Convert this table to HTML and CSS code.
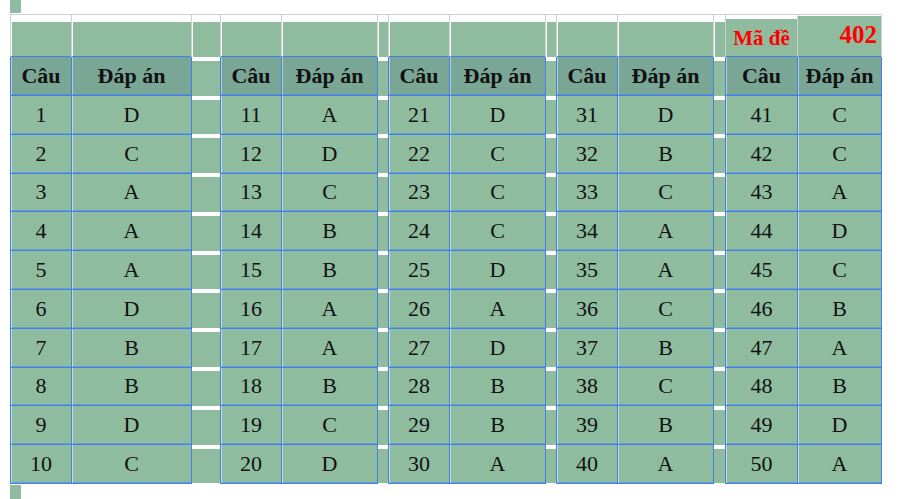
FILE: index.html
```html
<!DOCTYPE html>
<html lang="vi">
<head>
<meta charset="utf-8">
<title>Đáp án</title>
<link rel="stylesheet" href="styles.css">
</head>
<body>
<div class="stub stub-top"></div>
<table class="sheet">
<colgroup>
<col class="w61"><col class="w120"><col class="w29">
<col class="w61"><col class="w96"><col class="w11">
<col class="w61"><col class="w96"><col class="w11">
<col class="w61"><col class="w96"><col class="w12">
<col class="w72"><col class="w84">
</colgroup>
<tr class="top">
<td></td><td></td><td></td><td></td><td></td><td></td><td></td><td></td><td></td><td></td><td></td><td></td>
<td class="code-label">Mã đề</td><td class="code-value">402</td>
</tr>
<tr class="head">
<th>Câu</th><th>Đáp án</th><td class="gap"></td>
<th>Câu</th><th>Đáp án</th><td class="gap"></td>
<th>Câu</th><th>Đáp án</th><td class="gap"></td>
<th>Câu</th><th>Đáp án</th><td class="gap"></td>
<th>Câu</th><th>Đáp án</th>
</tr>
<tr class="row"><td>1</td><td>D</td><td class="gap"></td><td>11</td><td>A</td><td class="gap"></td><td>21</td><td>D</td><td class="gap"></td><td>31</td><td>D</td><td class="gap"></td><td>41</td><td>C</td></tr>
<tr class="row"><td>2</td><td>C</td><td class="gap"></td><td>12</td><td>D</td><td class="gap"></td><td>22</td><td>C</td><td class="gap"></td><td>32</td><td>B</td><td class="gap"></td><td>42</td><td>C</td></tr>
<tr class="row"><td>3</td><td>A</td><td class="gap"></td><td>13</td><td>C</td><td class="gap"></td><td>23</td><td>C</td><td class="gap"></td><td>33</td><td>C</td><td class="gap"></td><td>43</td><td>A</td></tr>
<tr class="row"><td>4</td><td>A</td><td class="gap"></td><td>14</td><td>B</td><td class="gap"></td><td>24</td><td>C</td><td class="gap"></td><td>34</td><td>A</td><td class="gap"></td><td>44</td><td>D</td></tr>
<tr class="row"><td>5</td><td>A</td><td class="gap"></td><td>15</td><td>B</td><td class="gap"></td><td>25</td><td>D</td><td class="gap"></td><td>35</td><td>A</td><td class="gap"></td><td>45</td><td>C</td></tr>
<tr class="row"><td>6</td><td>D</td><td class="gap"></td><td>16</td><td>A</td><td class="gap"></td><td>26</td><td>A</td><td class="gap"></td><td>36</td><td>C</td><td class="gap"></td><td>46</td><td>B</td></tr>
<tr class="row"><td>7</td><td>B</td><td class="gap"></td><td>17</td><td>A</td><td class="gap"></td><td>27</td><td>D</td><td class="gap"></td><td>37</td><td>B</td><td class="gap"></td><td>47</td><td>A</td></tr>
<tr class="row"><td>8</td><td>B</td><td class="gap"></td><td>18</td><td>B</td><td class="gap"></td><td>28</td><td>B</td><td class="gap"></td><td>38</td><td>C</td><td class="gap"></td><td>48</td><td>B</td></tr>
<tr class="row"><td>9</td><td>D</td><td class="gap"></td><td>19</td><td>C</td><td class="gap"></td><td>29</td><td>B</td><td class="gap"></td><td>39</td><td>B</td><td class="gap"></td><td>49</td><td>D</td></tr>
<tr class="row"><td>10</td><td>C</td><td class="gap"></td><td>20</td><td>D</td><td class="gap"></td><td>30</td><td>A</td><td class="gap"></td><td>40</td><td>A</td><td class="gap"></td><td>50</td><td>A</td></tr>
</table>
<div class="stub stub-bottom"></div>
</body>
</html>
```

FILE: styles.css
```css
html, body {
  margin: 0;
  padding: 0;
  background: #ffffff;
}

body {
  font-family: "Liberation Serif", "DejaVu Serif", serif;
  color: #111111;
  overflow: hidden;
}

.stub {
  width: 11px;
  margin-left: 10px;
  background: #8fbc9f;
}

.stub-top {
  height: 13px;
  margin-bottom: 1px;
}

.stub-bottom {
  height: 15px;
  margin-top: 1px;
}

.sheet {
  margin-left: 10px;
  border-collapse: collapse;
  table-layout: fixed;
  width: 871px;
}

.w61 { width: 61px; }
.w120 { width: 120px; }
.w29 { width: 29px; }
.w96 { width: 96px; }
.w11 { width: 11px; }
.w12 { width: 12px; }
.w72 { width: 72px; }
.w84 { width: 84px; }

.sheet td,
.sheet th {
  padding: 0;
  text-align: center;
  vertical-align: middle;
  background: #8fbc9f;
  font-size: 22px;
  line-height: 1;
}

.top {
  height: 42px;
}

.top td {
  border-top: 1px solid #d0d0d0;
  border-left: 1px solid #d0d0d0;
  border-right: 1px solid #d0d0d0;
  border-bottom: none;
  box-shadow: inset 0 7px 0 #ffffff, inset 1px 0 0 #ffffff;
}

.top .code-label {
  color: #ff0000;
  font-weight: bold;
  font-size: 21px;
  box-shadow: inset 0 4px 0 #ffffff;
  padding-top: 5px;
}

.top .code-value {
  color: #ff0000;
  font-weight: bold;
  font-size: 25px;
  text-align: right;
  padding-right: 4px;
  padding-bottom: 2px;
  box-shadow: inset 0 1px 0 #ffffff;
}

.head {
  height: 39px;
}

.head th {
  background: #7aa695;
  font-weight: bold;
  border: 1px solid #3f7ff0;
  box-shadow: inset 1px 0 0 rgba(255, 255, 255, 0.45), inset 0 -1px 0 rgba(63, 127, 240, 0.5);
}

.row {
  height: 38.8px;
}

.row td {
  border: 1px solid #3f7ff0;
  box-shadow: inset 1px 0 0 rgba(255, 255, 255, 0.5), inset 0 -1px 0 rgba(63, 127, 240, 0.45);
}

.sheet td.gap {
  border: none;
  box-shadow: inset 0 4px 0 #ffffff;
}
```
